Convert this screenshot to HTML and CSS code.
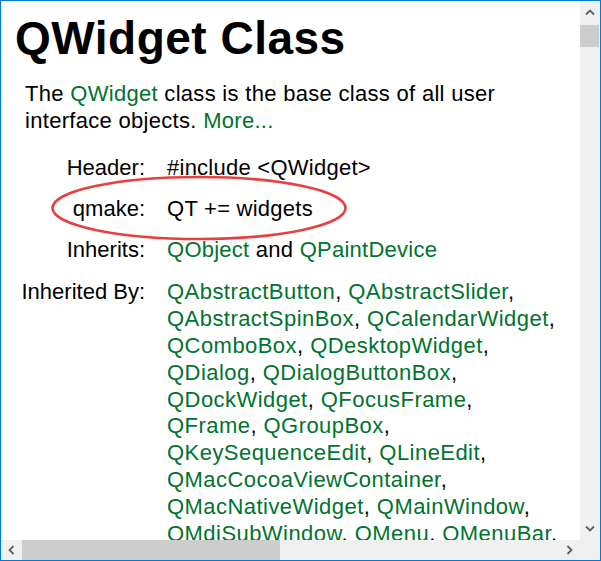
FILE: index.html
```html
<!DOCTYPE html>
<html>
<head>
<meta charset="utf-8">
<link rel="stylesheet" href="styles.css">
</head>
<body>
<div class="window">
  <div class="content">
    <h1 class="title">QWidget Class</h1>
    <p class="intro">The <a class="link">QWidget</a> class is the base class of all user<br>interface objects. <a class="link">More...</a></p>
    <div class="props">
      <div class="label">Header:</div>
      <div class="value">#include &lt;QWidget&gt;</div>
      <div class="label">qmake:</div>
      <div class="value">QT += widgets</div>
      <div class="label">Inherits:</div>
      <div class="value"><a class="link">QObject</a> and <a class="link">QPaintDevice</a></div>
      <div class="label last">Inherited By:</div>
      <div class="value last list">
        <span class="line"><a class="link">QAbstractButton</a>, <a class="link">QAbstractSlider</a>,</span>
        <span class="line"><a class="link">QAbstractSpinBox</a>, <a class="link">QCalendarWidget</a>,</span>
        <span class="line"><a class="link">QComboBox</a>, <a class="link">QDesktopWidget</a>,</span>
        <span class="line"><a class="link">QDialog</a>, <a class="link">QDialogButtonBox</a>,</span>
        <span class="line"><a class="link">QDockWidget</a>, <a class="link">QFocusFrame</a>,</span>
        <span class="line"><a class="link">QFrame</a>, <a class="link">QGroupBox</a>,</span>
        <span class="line"><a class="link">QKeySequenceEdit</a>, <a class="link">QLineEdit</a>,</span>
        <span class="line"><a class="link">QMacCocoaViewContainer</a>,</span>
        <span class="line"><a class="link">QMacNativeWidget</a>, <a class="link">QMainWindow</a>,</span>
        <span class="line"><a class="link">QMdiSubWindow</a>, <a class="link">QMenu</a>, <a class="link">QMenuBar</a>,</span>
      </div>
    </div>
    <svg class="mark" width="298" height="66" viewBox="0 0 298 66">
      <ellipse cx="149" cy="33" rx="146.5" ry="31" fill="none" stroke="#e8403f" stroke-width="2.6"/>
    </svg>
  </div>
  <div class="vscroll">
    <div class="sbtn">
      <svg width="10" height="7" viewBox="0 0 10 7"><polyline points="1,5.5 5,1.5 9,5.5" fill="none" stroke="#606060" stroke-width="1.8"/></svg>
    </div>
    <div class="vthumb"></div>
    <div class="vspace"></div>
    <div class="sbtn">
      <svg width="10" height="7" viewBox="0 0 10 7"><polyline points="1,1.5 5,5.5 9,1.5" fill="none" stroke="#606060" stroke-width="1.8"/></svg>
    </div>
  </div>
  <div class="hscroll">
    <div class="hbtn">
      <svg width="7" height="10" viewBox="0 0 7 10"><polyline points="5.5,1 1.5,5 5.5,9" fill="none" stroke="#606060" stroke-width="1.8"/></svg>
    </div>
    <div class="hthumb"></div>
    <div class="hspace"></div>
    <div class="hbtn">
      <svg width="7" height="10" viewBox="0 0 7 10"><polyline points="1.5,1 5.5,5 1.5,9" fill="none" stroke="#606060" stroke-width="1.8"/></svg>
    </div>
  </div>
  <div class="corner"></div>
</div>
</body>
</html>
```

FILE: styles.css
```css
html, body {
  margin: 0;
  padding: 0;
  background: #ffffff;
}

.window {
  width: 601px;
  height: 561px;
  box-sizing: border-box;
  border: 1px solid #0078d7;
  display: grid;
  grid-template-columns: 579px 20px;
  grid-template-rows: 539px 20px;
  background: #ffffff;
  font-family: "Liberation Sans", Arial, sans-serif;
  color: #000000;
}

.content {
  position: relative;
  overflow: hidden;
  padding-left: 14px;
  background: #ffffff;
}

.title {
  margin: 11px 0 0 0;
  font-size: 46px;
  line-height: 52px;
  font-weight: bold;
  letter-spacing: 0.5px;
  white-space: nowrap;
}

.intro {
  margin: 17px 0 0 10px;
  font-size: 22px;
  line-height: 26.8px;
  letter-spacing: 0.3px;
  white-space: nowrap;
}

.link {
  color: #00732f;
  text-decoration: none;
}

.props {
  margin: 13.4px 0 0 6.5px;
  display: grid;
  grid-template-columns: max-content max-content;
  column-gap: 22px;
  font-size: 22px;
  line-height: 26.8px;
}

.label {
  text-align: right;
  padding: 7px 0;
  white-space: nowrap;
}

.value {
  padding: 7px 0;
  letter-spacing: 0.25px;
  white-space: nowrap;
}

.value.list {
  letter-spacing: 0.45px;
}

.label.last,
.value.last {
  padding-top: 9px;
}

.line {
  display: block;
}

.mark {
  position: absolute;
  left: 49px;
  top: 174px;
}

.vscroll {
  background: #f0f0f0;
  display: flex;
  flex-direction: column;
}

.sbtn {
  height: 23px;
  display: flex;
  align-items: center;
  justify-content: center;
  flex: none;
}

.vthumb {
  height: 22px;
  margin: 1px 1px 0 0;
  background: #cdcdcd;
  flex: none;
}

.vspace {
  flex: 1;
}

.hscroll {
  background: #f0f0f0;
  display: flex;
}

.hbtn {
  width: 21px;
  display: flex;
  align-items: center;
  justify-content: center;
  flex: none;
}

.hthumb {
  width: 258px;
  background: #cdcdcd;
  flex: none;
}

.hspace {
  flex: 1;
}

.corner {
  background: #f0f0f0;
}
```
